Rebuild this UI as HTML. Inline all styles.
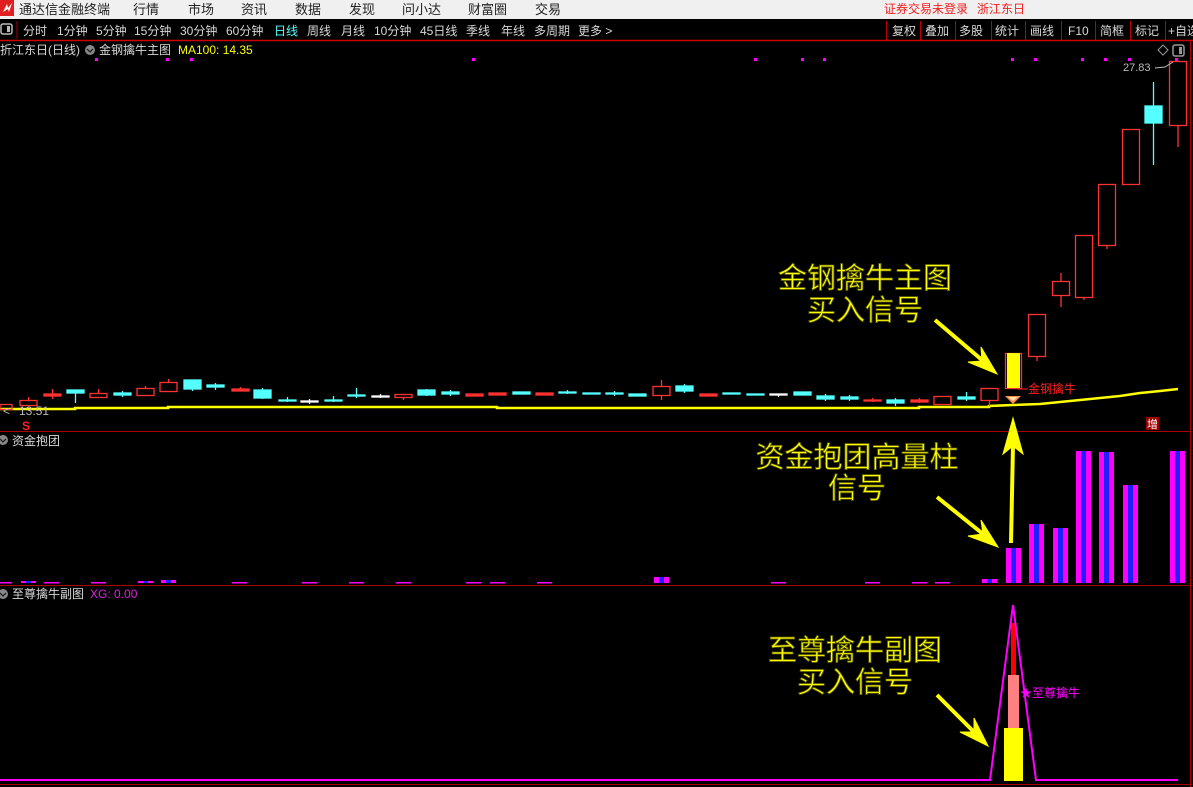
<!DOCTYPE html>
<html><head><meta charset="utf-8"><style>
html,body{margin:0;padding:0;background:#000;width:1193px;height:787px;overflow:hidden;font-family:"Liberation Sans","Noto Sans CJK SC",sans-serif}
svg{position:absolute;left:0;top:0}
</style></head><body>
<svg width="1193" height="787" viewBox="0 0 1193 787" xmlns="http://www.w3.org/2000/svg" font-family="Liberation Sans, Noto Sans CJK SC, sans-serif">
<rect width="1193" height="787" fill="#000"/>
<!-- title bar -->
<rect x="0" y="0" width="1193" height="19" fill="#f0f0f0"/>
<rect x="0" y="0" width="14" height="16" fill="#e02020"/>
<path d="M3 12 L7 4 L8 8 L12 3 L9 12 L8 9 Z" fill="#fff"/>
<g font-size="13" fill="#222">
<text x="19" y="14">通达信金融终端</text>
<text x="133" y="14">行情</text><text x="188" y="14">市场</text><text x="241" y="14">资讯</text><text x="295" y="14">数据</text><text x="349" y="14">发现</text><text x="402" y="14">问小达</text><text x="468" y="14">财富圈</text><text x="535" y="14">交易</text>
</g>
<text x="884" y="13" font-size="12" fill="#f02020">证券交易未登录</text>
<text x="977" y="13" font-size="12" fill="#f02020">浙江东日</text>
<!-- toolbar -->
<rect x="0" y="19" width="1193" height="21" fill="#000"/>
<rect x="1" y="24" width="11" height="10" fill="none" stroke="#bbb" stroke-width="1.5" rx="2"/>
<rect x="7" y="26" width="3" height="6" fill="#bbb"/>
<line x1="17" y1="21" x2="17" y2="39" stroke="#a00" />
<g font-size="12" fill="#d8d8d8">
<text x="23" y="35">分时</text><text x="57" y="35">1分钟</text><text x="96" y="35">5分钟</text><text x="134" y="35">15分钟</text><text x="180" y="35">30分钟</text><text x="226" y="35">60分钟</text><text x="274" y="35" fill="#54ffff">日线</text><text x="307" y="35">周线</text><text x="341" y="35">月线</text><text x="374" y="35">10分钟</text><text x="420" y="35">45日线</text><text x="466" y="35">季线</text><text x="501" y="35">年线</text><text x="534" y="35">多周期</text><text x="578" y="35">更多 &gt;</text>
<text x="892" y="35">复权</text><text x="925" y="35">叠加</text><text x="959" y="35">多股</text><text x="995" y="35">统计</text><text x="1030" y="35">画线</text><text x="1068" y="35">F10</text><text x="1100" y="35">简框</text><text x="1135" y="35">标记</text><text x="1168" y="35">+自选</text>
</g>
<g stroke="#b00" stroke-width="1">
<line x1="886.5" y1="21" x2="886.5" y2="40"/><line x1="920.5" y1="21" x2="920.5" y2="40"/><line x1="955.5" y1="21" x2="955.5" y2="40"/><line x1="991.5" y1="21" x2="991.5" y2="40"/><line x1="1025.5" y1="21" x2="1025.5" y2="40"/><line x1="1061.5" y1="21" x2="1061.5" y2="40"/><line x1="1095.5" y1="21" x2="1095.5" y2="40"/><line x1="1130.5" y1="21" x2="1130.5" y2="40"/><line x1="1165.5" y1="21" x2="1165.5" y2="40"/>
</g>
<line x1="0" y1="40.5" x2="1193" y2="40.5" stroke="#c00" stroke-width="1.5"/>
<!-- panel frames -->
<line x1="1190.5" y1="41" x2="1190.5" y2="787" stroke="#a00"/>
<line x1="0" y1="431.5" x2="1191" y2="431.5" stroke="#a00"/>
<line x1="0" y1="585.5" x2="1191" y2="585.5" stroke="#a00"/>
<line x1="0" y1="784.5" x2="1191" y2="784.5" stroke="#a00"/>
<!-- headers -->
<g font-size="12">
<text x="0" y="54" fill="#d8d8d8">折江东日(日线)</text>
<circle cx="90" cy="50" r="5" fill="#888"/><path d="M87 49 L90 52 L93 49" stroke="#222" stroke-width="1.3" fill="none"/>
<text x="99" y="54" fill="#d8d8d8">金钢擒牛主图</text>
<text x="178" y="54" fill="#ffff00">MA100: 14.35</text>
<circle cx="3" cy="440" r="5" fill="#888"/><path d="M0 439 L3 442 L6 439" stroke="#222" stroke-width="1.3" fill="none"/>
<text x="12" y="445" fill="#d8d8d8">资金抱团</text>
<circle cx="3" cy="594" r="5" fill="#888"/><path d="M0 593 L3 596 L6 593" stroke="#222" stroke-width="1.3" fill="none"/>
<text x="12" y="598" fill="#d8d8d8">至尊擒牛副图</text>
<text x="90" y="598" fill="#e020e0">XG: 0.00</text>
</g>
<path d="M1163 45 L1168 50 L1163 55 L1158 50 Z" fill="none" stroke="#999"/>
<rect x="1173" y="45" width="11" height="11" rx="2" fill="none" stroke="#999" stroke-width="1.5"/><rect x="1179" y="47" width="3" height="7" fill="#999"/>
<!-- magenta dots -->
<g fill="#ff00ff">
<rect x="95" y="58" width="3" height="3"/><rect x="166" y="58" width="3" height="3"/><rect x="190" y="58" width="3" height="3"/><rect x="472" y="58" width="3" height="3"/><rect x="754" y="58" width="3" height="3"/><rect x="801" y="58" width="3" height="3"/><rect x="823" y="58" width="3" height="3"/><rect x="1011" y="58" width="3" height="3"/><rect x="1034" y="58" width="3" height="3"/><rect x="1081" y="58" width="3" height="3"/><rect x="1104" y="58" width="3" height="3"/><rect x="1128" y="58" width="3" height="3"/><rect x="1175" y="58" width="3" height="3"/>
</g>
<!-- MA line -->
<polyline fill="none" stroke="#ffff00" stroke-width="2.5" points="0,409 75,409 75,408 168,408 168,407 497,407 497,408 919,408 919,407 989,407 989,406 1013,405 1040,404 1060,402 1080,400 1100,398 1120,396 1140,393 1160,391 1178,389"/>
<!-- candles -->
<g stroke-width="1.3">
<g stroke="#ff3232" fill="none">
<rect x="0" y="404.5" width="12" height="5"/>
<rect x="20" y="400.5" width="17" height="5"/><line x1="28.5" y1="397" x2="28.5" y2="400"/>
<rect x="90" y="393.5" width="17" height="4"/><line x1="98.5" y1="389" x2="98.5" y2="393"/>
<rect x="137" y="388.5" width="17" height="7"/><line x1="145.5" y1="386" x2="145.5" y2="388"/>
<rect x="160" y="382.5" width="17" height="9"/><line x1="168.5" y1="379" x2="168.5" y2="382"/>
<rect x="395" y="394.5" width="17" height="3"/><line x1="403.5" y1="397" x2="403.5" y2="400"/>
<rect x="653" y="386.5" width="17" height="9"/><line x1="661.5" y1="380" x2="661.5" y2="386"/><line x1="661.5" y1="396" x2="661.5" y2="400"/>
<rect x="934" y="396.5" width="17" height="8"/>
<rect x="981" y="388.5" width="17" height="12"/><line x1="989.5" y1="400" x2="989.5" y2="406"/>
<rect x="1005.5" y="353.5" width="16" height="35"/>
<rect x="1028.5" y="314.5" width="17" height="42"/><line x1="1037" y1="357" x2="1037" y2="361"/>
<rect x="1052.5" y="281.5" width="17" height="14"/><line x1="1061" y1="273" x2="1061" y2="281"/><line x1="1061" y1="296" x2="1061" y2="307"/>
<rect x="1075.5" y="235.5" width="17" height="62"/><line x1="1084" y1="298" x2="1084" y2="300"/>
<rect x="1098.5" y="184.5" width="17" height="61"/><line x1="1107" y1="246" x2="1107" y2="249"/>
<rect x="1122.5" y="129.5" width="17" height="55"/>
<rect x="1169.5" y="61.5" width="17" height="64"/><line x1="1178" y1="126" x2="1178" y2="147"/>
</g>
<g fill="#ff3232" stroke="#ff3232">
<rect x="44" y="394" width="17" height="2"/><line x1="52.5" y1="389" x2="52.5" y2="399"/>
<rect x="232" y="389" width="17" height="2"/><line x1="240.5" y1="387" x2="240.5" y2="389"/>
<rect x="466" y="394" width="17" height="2"/>
<rect x="489" y="393" width="17" height="2"/>
<rect x="536" y="393" width="17" height="2"/>
<rect x="700" y="394" width="17" height="2"/>
<rect x="864" y="400" width="17" height="1"/><line x1="872.5" y1="398" x2="872.5" y2="402"/>
<rect x="911" y="400" width="17" height="2"/><line x1="919.5" y1="398" x2="919.5" y2="403"/>
</g>
<g fill="#54ffff" stroke="#54ffff">
<rect x="67" y="390" width="17" height="3"/><line x1="75.5" y1="393" x2="75.5" y2="403"/>
<rect x="114" y="393" width="17" height="2"/><line x1="122.5" y1="391" x2="122.5" y2="397"/>
<rect x="184" y="380" width="17" height="9"/><line x1="192.5" y1="389" x2="192.5" y2="391"/>
<rect x="207" y="385" width="17" height="2"/><line x1="215.5" y1="383" x2="215.5" y2="390"/>
<rect x="254" y="390" width="17" height="8"/><line x1="262.5" y1="388" x2="262.5" y2="399"/>
<rect x="279" y="400" width="17" height="1"/><line x1="287.5" y1="397" x2="287.5" y2="402"/>
<rect x="325" y="400" width="17" height="1"/><line x1="333.5" y1="396" x2="333.5" y2="402"/>
<rect x="348" y="395" width="17" height="1"/><line x1="356.5" y1="388" x2="356.5" y2="398"/>
<rect x="418" y="390" width="17" height="5"/><line x1="426.5" y1="389" x2="426.5" y2="396"/>
<rect x="442" y="392" width="17" height="2"/><line x1="450.5" y1="390" x2="450.5" y2="396"/>
<rect x="513" y="392" width="17" height="2"/>
<rect x="559" y="392" width="17" height="1"/><line x1="567.5" y1="390" x2="567.5" y2="394"/>
<rect x="583" y="393" width="17" height="1"/>
<rect x="606" y="393" width="17" height="1"/><line x1="614.5" y1="391" x2="614.5" y2="396"/>
<rect x="629" y="394" width="17" height="2"/>
<rect x="676" y="386" width="17" height="5"/><line x1="684.5" y1="384" x2="684.5" y2="393"/>
<rect x="723" y="393" width="17" height="1"/>
<rect x="747" y="394" width="17" height="1"/>
<rect x="794" y="392" width="17" height="3"/>
<rect x="817" y="396" width="17" height="3"/><line x1="825.5" y1="394" x2="825.5" y2="401"/>
<rect x="841" y="397" width="17" height="2"/><line x1="849.5" y1="395" x2="849.5" y2="401"/>
<rect x="887" y="400" width="17" height="3"/><line x1="895.5" y1="398" x2="895.5" y2="406"/>
<rect x="958" y="397" width="17" height="2"/><line x1="966.5" y1="392" x2="966.5" y2="401"/>
<rect x="1145" y="106" width="17" height="17"/><line x1="1153.5" y1="82" x2="1153.5" y2="106"/><line x1="1153.5" y1="123" x2="1153.5" y2="165"/>
</g>
<g fill="#fff" stroke="#fff">
<rect x="301" y="401" width="17" height="1"/><line x1="309.5" y1="399" x2="309.5" y2="404"/>
<rect x="372" y="396" width="17" height="1"/><line x1="380.5" y1="394" x2="380.5" y2="398"/>
<rect x="770" y="394" width="17" height="1"/><line x1="778.5" y1="394" x2="778.5" y2="397"/>
</g>
</g>
<rect x="1007" y="353" width="13" height="35" fill="#ffff00"/>
<!-- labels main -->
<text x="3" y="415" font-size="12" fill="#bbb">&lt;</text>
<text x="19" y="415" font-size="12" fill="#bbb">13.51</text>
<text x="22" y="430" font-size="12" fill="#ff2020" font-weight="bold">S</text>
<text x="1123" y="71" font-size="11" fill="#bbb">27.83</text>
<path d="M1155 68 L1165 67 L1173 62" stroke="#bbb" fill="none"/>
<line x1="1018" y1="389" x2="1028" y2="389" stroke="#ff2020"/>
<text x="1028" y="393" font-size="12" fill="#ff2020">金钢擒牛</text>
<path d="M1005 396 L1021 396 L1013 404 Z" fill="#ff8a40"/><path d="M1008 397 L1018 397 L1013 401 Z" fill="#ffe0b0"/>
<rect x="1146" y="417" width="13" height="13" fill="#900"/>
<text x="1147" y="428" font-size="11" fill="#fff">增</text>
<!-- panel 2 small bars -->
<g>
<rect x="0" y="582" width="12" height="1.5" fill="#ff00ff"/><rect x="21" y="581" width="15" height="2" fill="#ff00ff"/><rect x="26" y="581" width="5" height="2" fill="#2020ff"/>
<rect x="44" y="582" width="15" height="1.5" fill="#ff00ff"/><rect x="91" y="582" width="15" height="1.5" fill="#ff00ff"/>
<rect x="138" y="581" width="15" height="2" fill="#ff00ff"/><rect x="143" y="581" width="5" height="2" fill="#2020ff"/>
<rect x="161" y="580" width="15" height="3" fill="#ff00ff"/><rect x="166" y="580" width="5" height="3" fill="#2020ff"/>
<rect x="232" y="582" width="15" height="1.5" fill="#ff00ff"/><rect x="302" y="582" width="15" height="1.5" fill="#ff00ff"/><rect x="349" y="582" width="15" height="1.5" fill="#ff00ff"/><rect x="396" y="582" width="15" height="1.5" fill="#ff00ff"/><rect x="466" y="582" width="15" height="1.5" fill="#ff00ff"/><rect x="490" y="582" width="15" height="1.5" fill="#ff00ff"/><rect x="537" y="582" width="15" height="1.5" fill="#ff00ff"/>
<rect x="654" y="577" width="15" height="6" fill="#ff00ff"/><rect x="659" y="577" width="5" height="6" fill="#2020ff"/>
<rect x="771" y="582" width="15" height="1.5" fill="#ff00ff"/><rect x="865" y="582" width="15" height="1.5" fill="#ff00ff"/><rect x="912" y="582" width="15" height="1.5" fill="#ff00ff"/><rect x="935" y="582" width="15" height="1.5" fill="#ff00ff"/>
<rect x="982" y="579" width="15" height="4" fill="#ff00ff"/><rect x="987" y="579" width="5" height="4" fill="#2020ff"/>
</g>
<g>
<rect x="1006" y="548" width="15" height="35" fill="#ff00ff"/><rect x="1011" y="548" width="5" height="35" fill="#2020ff"/>
<rect x="1029" y="524" width="15" height="59" fill="#ff00ff"/><rect x="1034" y="524" width="5" height="59" fill="#2020ff"/>
<rect x="1053" y="528" width="15" height="55" fill="#ff00ff"/><rect x="1058" y="528" width="5" height="55" fill="#2020ff"/>
<rect x="1076" y="451" width="15" height="132" fill="#ff00ff"/><rect x="1081" y="451" width="5" height="132" fill="#2020ff"/>
<rect x="1099" y="452" width="15" height="131" fill="#ff00ff"/><rect x="1104" y="452" width="5" height="131" fill="#2020ff"/>
<rect x="1123" y="485" width="15" height="98" fill="#ff00ff"/><rect x="1128" y="485" width="5" height="98" fill="#2020ff"/>
<rect x="1170" y="451" width="15" height="132" fill="#ff00ff"/><rect x="1175" y="451" width="5" height="132" fill="#2020ff"/>
</g>
<!-- panel 3 -->
<rect x="1004" y="728" width="19" height="53" fill="#ffff00"/>
<rect x="1008" y="675" width="11" height="53" fill="#ff8080"/>
<rect x="1011" y="623" width="5" height="52" fill="#ff0000"/>
<polyline fill="none" stroke="#ff00ff" stroke-width="2" points="0,780 990,780 1013,605 1036,780 1178,780"/>
<text x="1020" y="697" font-size="12" fill="#ff00ff">★至尊擒牛</text>
<!-- annotations -->
<g font-size="29" fill="#ffff00" stroke="#5a5a00" stroke-width="0.8" text-anchor="middle">
<text x="865" y="288">金钢擒牛主图</text>
<text x="865" y="320">买入信号</text>
<text x="857" y="467">资金抱团高量柱</text>
<text x="857" y="498">信号</text>
<text x="855" y="660">至尊擒牛副图</text>
<text x="855" y="692">买入信号</text>
</g>
<g stroke="#ffff00" stroke-width="4" fill="#ffff00">
<line x1="935" y1="320" x2="982" y2="360"/>
<polygon stroke-width="1" points="997,374 981,347 982,361 968,362"/>
<line x1="937" y1="497" x2="983" y2="534"/>
<polygon stroke-width="1" points="998,547 981,520 983,534 968,536"/>
<line x1="937" y1="695" x2="974" y2="732"/>
<polygon stroke-width="1" points="988,746 974,718 974,732 960,732"/>
<line x1="1011" y1="543" x2="1013" y2="445"/>
<polygon stroke-width="1" points="1013,418 1003,454 1013,446 1023,454"/>
</g>
</svg>
</body></html>
